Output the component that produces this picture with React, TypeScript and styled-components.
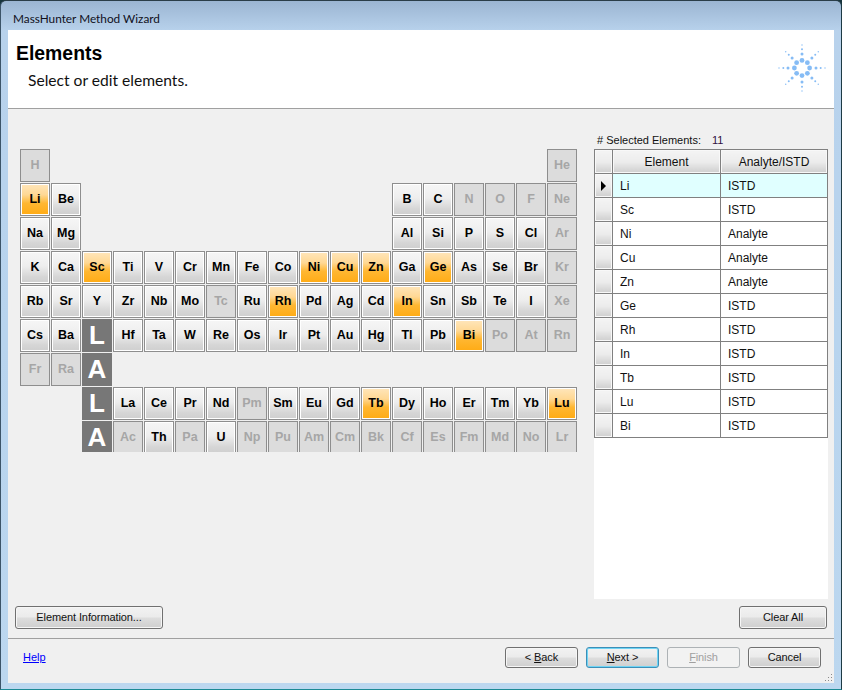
import React from 'react';
import styled, {createGlobalStyle} from 'styled-components';

const GlobalStyle = createGlobalStyle`
    html, body {
        margin: 0;
        padding: 0;
        background: #16343c;
    }
    #root {
        width: 842px;
        height: 690px;
        overflow: hidden;
    }
`;

const uiFont = `Lato, 'Open Sans', sans-serif`;
const controlFont = `'Liberation Sans', Arial, sans-serif`;

const Window = styled.div`
    width: 842px;
    height: 690px;
    box-sizing: border-box;
    display: flex;
    flex-direction: column;
    border: 1px solid #2a3d48;
    border-left-color: #3c5468;
    border-bottom-color: #1c8a94;
    border-right-color: #1d3a44;
    border-radius: 6px 6px 0 0;
    background: linear-gradient(180deg, #9bb5d2 0, #b8d2ec 30px, #b8d4ee 340px, #bcd7ef 100%);
    font-family: ${uiFont};
    color: #000;
    overflow: hidden;
`;

const TitleBar = styled.div`
    height: 29px;
    flex: none;
    display: flex;
    align-items: center;
    padding-left: 12px;
    padding-top: 5px;
    box-sizing: border-box;
    font-size: 11.8px;
    color: #10101c;
`;

const Client = styled.div`
    flex: 1;
    margin: 0 7px 6px 7px;
    display: flex;
    flex-direction: column;
    background: #f0f0f0;
    min-height: 0;
`;

const Header = styled.header`
    height: 79px;
    flex: none;
    box-sizing: border-box;
    background: #fff;
    border-bottom: 1px solid #a0a0a0;
    display: flex;
    justify-content: space-between;
    padding: 13px 7px 0 8px;
`;

const HeaderText = styled.div`
    display: flex;
    flex-direction: column;
`;

const Heading = styled.h1`
    margin: 0;
    font: bold 19.4px/20px ${controlFont};
`;

const SubHeading = styled.p`
    margin: 7px 0 0 12px;
    font-size: 15.6px;
    line-height: 20px;
    color: #111;
`;

const Logo = styled.svg`
    width: 50px;
    height: 50px;
`;

const Main = styled.main`
    flex: 1;
    min-height: 0;
    display: flex;
    flex-direction: column;
    padding: 0 6px 9px 7px;
    border-bottom: 1px solid #a0a0a0;
`;

const Columns = styled.div`
    flex: 1;
    min-height: 0;
    display: flex;
    justify-content: space-between;
    padding: 0 0 7px 5px;
`;

const TableArea = styled.div`
    padding-top: 40px;
`;

const Periodic = styled.div`
    display: grid;
    grid-template-columns: repeat(18, 30px);
    grid-auto-rows: 33px;
    gap: 1px;
    height: 303px;
    overflow: hidden;
`;

const Cell = styled.div<{$col: number; $row: number; $state: string}>`
    grid-column: ${p => p.$col};
    grid-row: ${p => p.$row};
    box-sizing: border-box;
    display: flex;
    align-items: center;
    justify-content: center;
    border: 1px solid #8e8e8e;
    font: bold 12.5px ${controlFont};
    padding-bottom: 2px;
    color: ${p => (p.$state === 'off' ? '#a6a6a6' : '#000')};
    background: ${p =>
        p.$state === 'off'
            ? '#dcdcdc'
            : p.$state === 'on'
            ? 'linear-gradient(180deg, #ffe6bb 0, #ffd894 35%, #ffb732 62%, #ffab14 100%)'
            : 'linear-gradient(180deg, #f6f6f6 0, #eeeeee 45%, #d6d6d6 80%, #cfcfcf 100%)'};
    box-shadow: ${p => (p.$state === 'off' ? 'none' : 'inset 0 0 0 1px #fff')};
`;

const SeriesTile = styled.div<{$col: number; $row: number}>`
    grid-column: ${p => p.$col};
    grid-row: ${p => p.$row};
    display: flex;
    align-items: center;
    justify-content: center;
    background: #777;
    color: #fff;
    font: bold 26px ${controlFont};
`;

const Side = styled.aside`
    width: 234px;
    display: flex;
    flex-direction: column;
`;

const SelectedLabel = styled.div`
    height: 40px;
    flex: none;
    box-sizing: border-box;
    padding: 24px 0 0 3px;
    display: flex;
    gap: 11px;
    font: 11px/15px ${controlFont};
    color: #111;
    white-space: nowrap;
`;

const Count = styled.span`
    color: #301040;
`;

const GridPanel = styled.div`
    flex: 1;
    background: #fff;
    min-height: 0;
`;

const DataGrid = styled.table`
    width: 233px;
    border-collapse: collapse;
    table-layout: fixed;
    font: 12px ${controlFont};
`;

const HeadCell = styled.th<{$width: number}>`
    width: ${p => p.$width}px;
    height: 24px;
    padding: 0;
    box-sizing: border-box;
    border: 1px solid #808080;
    font-weight: 400;
    color: #111;
    background: linear-gradient(180deg, #f4f4f4 0, #ececec 50%, #d6d6d6 85%, #cfcfcf 100%);
    box-shadow: inset 0 0 0 1px #f8f8f8;
`;

const RowHead = styled.td`
    height: 24px;
    padding: 0;
    box-sizing: border-box;
    border: 1px solid #808080;
    text-align: center;
    vertical-align: middle;
    line-height: 0;
    background: linear-gradient(180deg, #f4f4f4 0, #ececec 50%, #d6d6d6 85%, #cfcfcf 100%);
    box-shadow: inset 0 0 0 1px #f8f8f8;
`;

const DataCell = styled.td<{$current: boolean}>`
    height: 24px;
    padding: 0 0 0 7px;
    box-sizing: border-box;
    border: 1px solid #808080;
    background: ${p => (p.$current ? '#e0ffff' : '#fff')};
    color: #111;
`;

const BarRow = styled.div`
    display: flex;
    justify-content: space-between;
    align-items: center;
    flex: none;
    margin-right: 1px;
`;

const Button = styled.button<{$width: number; $focused?: boolean; $height?: number}>`
    width: ${p => p.$width}px;
    height: ${p => p.$height ?? 23}px;
    padding: 0 0 1px;
    box-sizing: border-box;
    font: 11px ${controlFont};
    letter-spacing: -0.1px;
    color: #111;
    border: 1px solid ${p => (p.$focused ? '#3c8fb8' : '#707070')};
    border-radius: 3px;
    background: linear-gradient(180deg, #f2f2f2 0, #ebebeb 48%, #dddddd 52%, #cfcfcf 100%);
    box-shadow: inset 0 0 0 1px ${p => (p.$focused ? '#6fd4f4' : '#f6f6f6')};

    &:disabled {
        color: #a0a0a0;
        border-color: #adb2b5;
        background: #f2f2f2;
        box-shadow: none;
    }

    u {
        text-underline-offset: 1px;
    }
`;

const Footer = styled.footer`
    flex: none;
    height: 44px;
    box-sizing: border-box;
    position: relative;
    display: flex;
    justify-content: space-between;
    align-items: flex-start;
    padding: 8px 13px 0 15px;
`;

const HelpLink = styled.a`
    color: #0000ff;
    font: 11px/21px ${controlFont};
    text-decoration: underline;
`;

const NavButtons = styled.div`
    display: flex;
    gap: 8px;
`;

const Grip = styled.svg`
    position: absolute;
    right: 0;
    bottom: 0;
    width: 12px;
    height: 12px;
`;

const ELEMENT_ROWS: string[][] = [
    ['H', ...Array(16).fill(''), 'He'],
    ['Li', 'Be', ...Array(10).fill(''), 'B', 'C', 'N', 'O', 'F', 'Ne'],
    ['Na', 'Mg', ...Array(10).fill(''), 'Al', 'Si', 'P', 'S', 'Cl', 'Ar'],
    ['K', 'Ca', 'Sc', 'Ti', 'V', 'Cr', 'Mn', 'Fe', 'Co', 'Ni', 'Cu', 'Zn', 'Ga', 'Ge', 'As', 'Se', 'Br', 'Kr'],
    ['Rb', 'Sr', 'Y', 'Zr', 'Nb', 'Mo', 'Tc', 'Ru', 'Rh', 'Pd', 'Ag', 'Cd', 'In', 'Sn', 'Sb', 'Te', 'I', 'Xe'],
    ['Cs', 'Ba', '', 'Hf', 'Ta', 'W', 'Re', 'Os', 'Ir', 'Pt', 'Au', 'Hg', 'Tl', 'Pb', 'Bi', 'Po', 'At', 'Rn'],
    ['Fr', 'Ra'],
    ['', '', '', 'La', 'Ce', 'Pr', 'Nd', 'Pm', 'Sm', 'Eu', 'Gd', 'Tb', 'Dy', 'Ho', 'Er', 'Tm', 'Yb', 'Lu'],
    ['', '', '', 'Ac', 'Th', 'Pa', 'U', 'Np', 'Pu', 'Am', 'Cm', 'Bk', 'Cf', 'Es', 'Fm', 'Md', 'No', 'Lr']
];

const SERIES_TILES = [
    {label: 'L', row: 6},
    {label: 'A', row: 7},
    {label: 'L', row: 8},
    {label: 'A', row: 9}
];

const DISABLED = 'H He N O F Ne Ar Kr Tc Xe Po At Rn Fr Ra Pm Ac Pa Np Pu Am Cm Bk Cf Es Fm Md No Lr'.split(' ');

const SELECTED: [string, string][] = [
    ['Li', 'ISTD'],
    ['Sc', 'ISTD'],
    ['Ni', 'Analyte'],
    ['Cu', 'Analyte'],
    ['Zn', 'Analyte'],
    ['Ge', 'ISTD'],
    ['Rh', 'ISTD'],
    ['In', 'ISTD'],
    ['Tb', 'ISTD'],
    ['Lu', 'ISTD'],
    ['Bi', 'ISTD']
];

const cellState = (symbol: string): string => {
    if (DISABLED.includes(symbol)) return 'off';
    return SELECTED.some(([el]) => el === symbol) ? 'on' : 'idle';
};

const SPARK_RINGS = [
    {radius: 7.6, dot: 2.4},
    {radius: 14, dot: 1.5},
    {radius: 18.7, dot: 1},
    {radius: 23, dot: 0.7}
];

const SPARK_DOTS = SPARK_RINGS.flatMap(ring =>
    [0, 1, 2, 3, 4, 5, 6, 7].map(i => ({
        cx: 25 + ring.radius * Math.cos((i * Math.PI) / 4),
        cy: 25 + ring.radius * Math.sin((i * Math.PI) / 4),
        r: ring.dot
    }))
);

const App: React.FC = () => (
    <>
        <GlobalStyle />
        <Window>
            <TitleBar>MassHunter Method Wizard</TitleBar>
            <Client>
                <Header>
                    <HeaderText>
                        <Heading>Elements</Heading>
                        <SubHeading>Select or edit elements.</SubHeading>
                    </HeaderText>
                    <Logo viewBox="0 0 50 50">
                        {SPARK_DOTS.map(d => (
                            <circle key={`${d.cx}-${d.cy}`} cx={d.cx} cy={d.cy} r={d.r} fill="#86bcf5" />
                        ))}
                    </Logo>
                </Header>
                <Main>
                    <Columns>
                        <TableArea>
                            <Periodic>
                                {ELEMENT_ROWS.flatMap((symbols, row) =>
                                    symbols.map((symbol, col) =>
                                        symbol ? (
                                            <Cell key={symbol} $col={col + 1} $row={row + 1} $state={cellState(symbol)}>
                                                {symbol}
                                            </Cell>
                                        ) : null
                                    )
                                )}
                                {SERIES_TILES.map(tile => (
                                    <SeriesTile key={tile.row} $col={3} $row={tile.row}>
                                        {tile.label}
                                    </SeriesTile>
                                ))}
                            </Periodic>
                        </TableArea>
                        <Side>
                            <SelectedLabel>
                                <span># Selected Elements:</span>
                                <Count>11</Count>
                            </SelectedLabel>
                            <GridPanel>
                                <DataGrid>
                                    <thead>
                                        <tr>
                                            <HeadCell $width={18} />
                                            <HeadCell $width={108}>Element</HeadCell>
                                            <HeadCell $width={107}>Analyte/ISTD</HeadCell>
                                        </tr>
                                    </thead>
                                    <tbody>
                                        {SELECTED.map(([element, role], i) => (
                                            <tr key={element}>
                                                <RowHead>
                                                    {i === 0 && (
                                                        <svg width="7" height="10" viewBox="0 0 7 10">
                                                            <path d="M1 0v10l5-5z" fill="#000" />
                                                        </svg>
                                                    )}
                                                </RowHead>
                                                <DataCell $current={i === 0}>{element}</DataCell>
                                                <DataCell $current={i === 0}>{role}</DataCell>
                                            </tr>
                                        ))}
                                    </tbody>
                                </DataGrid>
                            </GridPanel>
                        </Side>
                    </Columns>
                    <BarRow>
                        <Button $width={148}>Element Information...</Button>
                        <Button $width={88}>Clear All</Button>
                    </BarRow>
                </Main>
                <Footer>
                    <HelpLink href="#help">Help</HelpLink>
                    <NavButtons>
                        <Button $width={73} $height={21}>
                            &lt; <u>B</u>ack
                        </Button>
                        <Button $width={73} $height={21} $focused>
                            <u>N</u>ext &gt;
                        </Button>
                        <Button $width={73} $height={21} disabled>
                            <u>F</u>inish
                        </Button>
                        <Button $width={73} $height={21}>
                            Cancel
                        </Button>
                    </NavButtons>
                    <Grip viewBox="0 0 12 12">
                        {[
                            [9, 3],
                            [6, 6],
                            [9, 6],
                            [3, 9],
                            [6, 9],
                            [9, 9]
                        ].map(([x, y]) => (
                            <rect key={`${x}-${y}`} x={x} y={y} width="1" height="1" fill="#8a8a8a" />
                        ))}
                    </Grip>
                </Footer>
            </Client>
        </Window>
    </>
);

export default App;
